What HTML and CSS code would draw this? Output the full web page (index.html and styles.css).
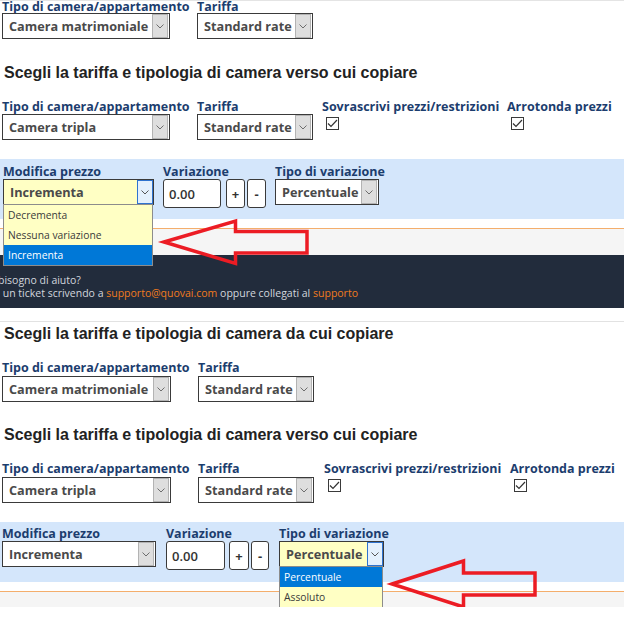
FILE: index.html
```html
<!DOCTYPE html>
<html lang="it">
<head>
<meta charset="utf-8">
<title>Copia tariffe</title>
<link rel="stylesheet" href="styles.css">
</head>
<body>
<section class="shot shot-a">
  <div class="row row-top">
    <div class="field f-room">
      <span class="lbl">Tipo di camera/appartamento</span>
      <div class="sel w-room"><span class="sel-text">Camera matrimoniale</span><span class="sel-btn"><svg width="8" height="5" viewBox="0 0 8 5"><polyline points="0.5,0.5 4,4 7.5,0.5" fill="none" stroke="#6d6d6d" stroke-width="1"/></svg></span></div>
    </div>
    <div class="field f-rate">
      <span class="lbl">Tariffa</span>
      <div class="sel w-rate"><span class="sel-text">Standard rate</span><span class="sel-btn"><svg width="8" height="5" viewBox="0 0 8 5"><polyline points="0.5,0.5 4,4 7.5,0.5" fill="none" stroke="#6d6d6d" stroke-width="1"/></svg></span></div>
    </div>
  </div>

  <h2 class="heading">Scegli la tariffa e tipologia di camera verso cui copiare</h2>

  <div class="row row-target">
    <div class="field f-room">
      <span class="lbl">Tipo di camera/appartamento</span>
      <div class="sel w-room"><span class="sel-text">Camera tripla</span><span class="sel-btn"><svg width="8" height="5" viewBox="0 0 8 5"><polyline points="0.5,0.5 4,4 7.5,0.5" fill="none" stroke="#6d6d6d" stroke-width="1"/></svg></span></div>
    </div>
    <div class="field f-rate">
      <span class="lbl">Tariffa</span>
      <div class="sel w-rate"><span class="sel-text">Standard rate</span><span class="sel-btn"><svg width="8" height="5" viewBox="0 0 8 5"><polyline points="0.5,0.5 4,4 7.5,0.5" fill="none" stroke="#6d6d6d" stroke-width="1"/></svg></span></div>
    </div>
    <div class="field f-over">
      <span class="lbl">Sovrascrivi prezzi/restrizioni</span>
      <span class="check"><svg width="11" height="9" viewBox="0 0 11 9"><polyline points="1,4.5 4,7.5 10,1" fill="none" stroke="#333" stroke-width="1.2"/></svg></span>
    </div>
    <div class="field f-round">
      <span class="lbl">Arrotonda prezzi</span>
      <span class="check"><svg width="11" height="9" viewBox="0 0 11 9"><polyline points="1,4.5 4,7.5 10,1" fill="none" stroke="#333" stroke-width="1.2"/></svg></span>
    </div>
  </div>

  <div class="panel">
    <div class="row row-panel">
      <div class="field f-mod">
        <span class="lbl">Modifica prezzo</span>
        <div class="sel sel-focus w-mod"><span class="sel-text">Incrementa</span><span class="sel-btn"><svg width="8" height="5" viewBox="0 0 8 5"><polyline points="0.5,0.5 4,4 7.5,0.5" fill="none" stroke="#555" stroke-width="1"/></svg></span>
          <ul class="dropdown">
            <li class="opt">Decrementa</li>
            <li class="opt">Nessuna variazione</li>
            <li class="opt opt-active">Incrementa</li>
          </ul>
        </div>
      </div>
      <div class="field f-var">
        <span class="lbl">Variazione</span>
        <div class="var-controls">
          <span class="num">0.00</span>
          <span class="btn btn-plus">+</span>
          <span class="btn btn-minus">-</span>
        </div>
      </div>
      <div class="field f-type">
        <span class="lbl">Tipo di variazione</span>
        <div class="sel w-type"><span class="sel-text">Percentuale</span><span class="sel-btn"><svg width="8" height="5" viewBox="0 0 8 5"><polyline points="0.5,0.5 4,4 7.5,0.5" fill="none" stroke="#6d6d6d" stroke-width="1"/></svg></span></div>
      </div>
    </div>
  </div>

  <div class="gap-white"></div>
  <div class="strip"></div>
  <footer class="footer">
    <p class="foot-line foot-l1">bisogno di aiuto?</p>
    <p class="foot-line foot-l2"> un ticket scrivendo a <a class="foot-link">supporto@quovai.com</a> oppure collegati al <a class="foot-link">supporto</a></p>
  </footer>

  <svg class="arrow" width="624" height="320" viewBox="0 0 624 320">
    <polygon points="164,241 235.5,220 235.5,230.5 307,230.5 307,252 235.5,252 235.5,262.5" fill="none" stroke="#ec1c24" stroke-width="3.5" stroke-linejoin="miter"/>
  </svg>
</section>

<section class="shot shot-b">
  <h2 class="heading heading-b1">Scegli la tariffa e tipologia di camera da cui copiare</h2>

  <div class="row row-b">
    <div class="field f-room">
      <span class="lbl">Tipo di camera/appartamento</span>
      <div class="sel w-room"><span class="sel-text">Camera matrimoniale</span><span class="sel-btn"><svg width="8" height="5" viewBox="0 0 8 5"><polyline points="0.5,0.5 4,4 7.5,0.5" fill="none" stroke="#6d6d6d" stroke-width="1"/></svg></span></div>
    </div>
    <div class="field f-rate">
      <span class="lbl">Tariffa</span>
      <div class="sel w-rate"><span class="sel-text">Standard rate</span><span class="sel-btn"><svg width="8" height="5" viewBox="0 0 8 5"><polyline points="0.5,0.5 4,4 7.5,0.5" fill="none" stroke="#6d6d6d" stroke-width="1"/></svg></span></div>
    </div>
  </div>

  <h2 class="heading heading-b2">Scegli la tariffa e tipologia di camera verso cui copiare</h2>

  <div class="row row-b">
    <div class="field f-room">
      <span class="lbl">Tipo di camera/appartamento</span>
      <div class="sel w-room"><span class="sel-text">Camera tripla</span><span class="sel-btn"><svg width="8" height="5" viewBox="0 0 8 5"><polyline points="0.5,0.5 4,4 7.5,0.5" fill="none" stroke="#6d6d6d" stroke-width="1"/></svg></span></div>
    </div>
    <div class="field f-rate">
      <span class="lbl">Tariffa</span>
      <div class="sel w-rate"><span class="sel-text">Standard rate</span><span class="sel-btn"><svg width="8" height="5" viewBox="0 0 8 5"><polyline points="0.5,0.5 4,4 7.5,0.5" fill="none" stroke="#6d6d6d" stroke-width="1"/></svg></span></div>
    </div>
    <div class="field f-over">
      <span class="lbl">Sovrascrivi prezzi/restrizioni</span>
      <span class="check"><svg width="11" height="9" viewBox="0 0 11 9"><polyline points="1,4.5 4,7.5 10,1" fill="none" stroke="#333" stroke-width="1.2"/></svg></span>
    </div>
    <div class="field f-round">
      <span class="lbl">Arrotonda prezzi</span>
      <span class="check"><svg width="11" height="9" viewBox="0 0 11 9"><polyline points="1,4.5 4,7.5 10,1" fill="none" stroke="#333" stroke-width="1.2"/></svg></span>
    </div>
  </div>

  <div class="panel panel-b">
    <div class="row row-panel row-panel-b">
      <div class="field f-mod">
        <span class="lbl">Modifica prezzo</span>
        <div class="sel w-mod"><span class="sel-text">Incrementa</span><span class="sel-btn"><svg width="8" height="5" viewBox="0 0 8 5"><polyline points="0.5,0.5 4,4 7.5,0.5" fill="none" stroke="#6d6d6d" stroke-width="1"/></svg></span></div>
      </div>
      <div class="field f-var">
        <span class="lbl">Variazione</span>
        <div class="var-controls">
          <span class="num">0.00</span>
          <span class="btn btn-plus">+</span>
          <span class="btn btn-minus">-</span>
        </div>
      </div>
      <div class="field f-type">
        <span class="lbl">Tipo di variazione</span>
        <div class="sel sel-focus w-type"><span class="sel-text">Percentuale</span><span class="sel-btn"><svg width="8" height="5" viewBox="0 0 8 5"><polyline points="0.5,0.5 4,4 7.5,0.5" fill="none" stroke="#555" stroke-width="1"/></svg></span>
          <ul class="dropdown">
            <li class="opt opt-active">Percentuale</li>
            <li class="opt">Assoluto</li>
          </ul>
        </div>
      </div>
    </div>
  </div>

  <div class="gap-white"></div>
  <div class="strip strip-b"></div>

  <svg class="arrow" width="624" height="290" viewBox="0 0 624 290">
    <polygon points="392,262 463.5,239 463.5,251 535,251 535,273 463.5,273 463.5,285" fill="none" stroke="#ec1c24" stroke-width="3.5" stroke-linejoin="miter"/>
  </svg>
</section>
</body>
</html>
```

FILE: styles.css
```css
* { box-sizing: border-box; }

html, body {
  margin: 0;
  padding: 0;
  background: #ffffff;
}

body {
  width: 624px;
  height: 638px;
  overflow: hidden;
  font-family: "Open Sans", "Liberation Sans", sans-serif;
  color: #333;
}

.shot {
  position: relative;
}

.shot-a {
  border-top: 1px solid #e4e4e4;
}

.shot-b {
  margin-top: 13px;
  border-top: 1px solid #e2e2e2;
  overflow: hidden;
}

.row {
  display: flex;
  align-items: flex-start;
  gap: 9px;
  padding-left: 2px;
}

.field {
  display: flex;
  flex-direction: column;
  align-items: flex-start;
  flex: none;
}

.lbl {
  font-size: 12.5px;
  font-weight: 700;
  line-height: 14px;
  color: #1c3d6e;
  white-space: nowrap;
}

.row-top .lbl {
  line-height: 12px;
}

.f-room { width: 186px; }
.f-rate { width: 116px; }
.f-over { width: 176px; }

.w-room { width: 168px; }
.w-rate { width: 116px; }
.w-mod { width: 151px; }
.w-type { width: 104px; }

.sel {
  position: relative;
  display: flex;
  height: 26px;
  border: 1px solid #3a3a3a;
  background: #ffffff;
}

.sel-text {
  flex: 1;
  padding-left: 6px;
  font-size: 12.7px;
  font-weight: 700;
  line-height: 24px;
  color: #4a4a4a;
  white-space: nowrap;
  overflow: hidden;
}

.sel-btn {
  width: 16px;
  margin-right: 1px;
  background: #dedede;
  border: 1px solid #b3b3b3;
  display: flex;
  align-items: center;
  justify-content: center;
}

.sel-focus {
  background: #ffffc4;
}

.sel-focus .sel-btn {
  background: #e4f0fc;
  border: 1px solid #2f73cf;
  margin-right: 0;
}

.dropdown {
  position: absolute;
  top: 100%;
  left: -1px;
  width: calc(100% + 1px);
  margin: 0;
  padding: 0;
  list-style: none;
  background: #ffffc4;
  border: 1px solid #8c8c8c;
  z-index: 2;
}

.opt {
  height: 20px;
  padding-left: 4px;
  font-size: 10.3px;
  line-height: 20px;
  color: #3a3a3a;
  white-space: nowrap;
}

.opt-active {
  background: #0078d7;
  color: #ffffff;
}

.heading {
  margin: 25px 0 18px 4px;
  font-family: "Liberation Sans", Arial, sans-serif;
  font-size: 16px;
  font-weight: 700;
  line-height: 18px;
  color: #222222;
}

.check {
  width: 13px;
  height: 13px;
  margin: 3px 0 0 4px;
  border: 1px solid #3a3a3a;
  background: #ffffff;
  display: flex;
  align-items: center;
  justify-content: center;
}

.panel {
  margin-top: 19px;
  padding: 6px 0 11px;
  background: #d4e6fb;
}

.row-panel {
  padding-left: 3px;
}

.var-controls {
  display: flex;
  align-items: flex-start;
}

.num {
  width: 58px;
  height: 29px;
  padding-left: 5px;
  border: 1px solid #3a3a3a;
  border-radius: 3px;
  background: #ffffff;
  font-size: 13px;
  font-weight: 600;
  line-height: 29px;
  color: #333;
}

.btn {
  width: 19px;
  height: 29px;
  border: 1px solid #3a3a3a;
  border-radius: 3px;
  background: #ffffff;
  font-size: 13px;
  font-weight: 700;
  line-height: 29px;
  text-align: center;
  color: #333;
}

.btn-plus { margin-left: 5px; }
.btn-minus { margin-left: 2px; }

.gap-white {
  height: 9px;
}

.strip {
  height: 27px;
  border-top: 1px solid #f4ae6c;
  background: #f5f5f5;
}

.footer {
  height: 53px;
  padding-top: 19px;
  background: #222c3c;
}

.foot-line {
  margin: 0;
  font-size: 10.5px;
  line-height: 13px;
  color: #d2d6dc;
  white-space: pre;
}

.foot-l1 { margin-left: -2px; }

.foot-link {
  color: #f07b1e;
}

.arrow {
  position: absolute;
  top: 0;
  left: 0;
  z-index: 3;
}

/* second capture */
.heading-b1 {
  margin-top: 3px;
  margin-bottom: 17px;
}

.heading-b2 {
  margin-top: 24px;
  margin-bottom: 17px;
}

.row-b {
  gap: 10px;
}

.row-b .lbl {
  line-height: 15px;
}

.row-b .sel {
  margin-top: 1px;
}

.shot-b .w-room { width: 169px; }

.panel-b {
  padding: 5px 0 12px;
}

.row-panel-b {
  padding-left: 2px;
  gap: 10px;
}

.row-panel-b .w-mod { width: 154px; }
.row-panel-b .w-type { width: 105px; }
.row-panel-b .num { width: 59px; }
.row-panel-b .btn-plus { margin-left: 4px; width: 20px; }
.row-panel-b .btn-minus { width: 18px; }

.strip-b {
  height: 16px;
}
```
